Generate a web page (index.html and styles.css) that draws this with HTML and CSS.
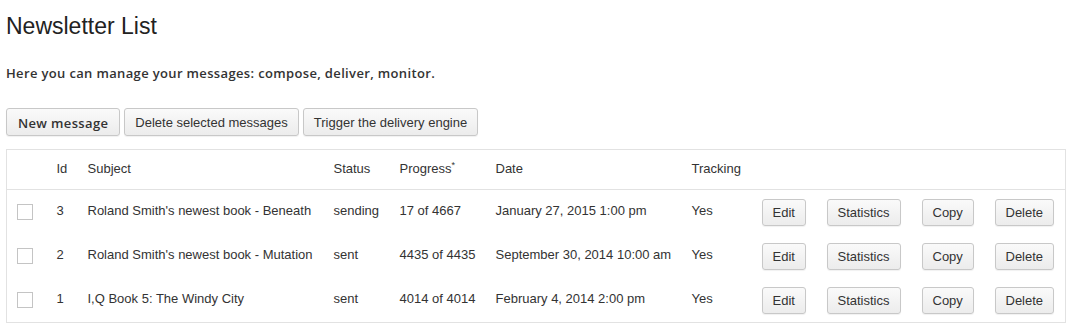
FILE: index.html
```html
<!DOCTYPE html>
<html lang="en">
<head>
    <meta charset="UTF-8">
    <title>Newsletter List</title>
    <link rel="stylesheet" href="styles.css">
</head>
<body>
    <div class="page">
        <h1 class="title">Newsletter List</h1>
        <p class="intro">Here you can manage your messages: compose, deliver, monitor.</p>

        <div class="toolbar">
            <button class="btn btn-strong">New message</button>
            <button class="btn">Delete selected messages</button>
            <button class="btn">Trigger the delivery engine</button>
        </div>

        <table class="list">
            <colgroup>
                <col style="width: 42px">
                <col style="width: 31px">
                <col style="width: 246px">
                <col style="width: 66px">
                <col style="width: 96px">
                <col style="width: 196px">
                <col style="width: 70px">
                <col style="width: 65px">
                <col style="width: 95px">
                <col style="width: 73px">
                <col>
            </colgroup>
            <thead>
                <tr>
                    <th></th>
                    <th>Id</th>
                    <th>Subject</th>
                    <th>Status</th>
                    <th class="progress-head">Progress<sup>*</sup></th>
                    <th>Date</th>
                    <th>Tracking</th>
                    <th></th>
                    <th></th>
                    <th></th>
                    <th></th>
                </tr>
            </thead>
            <tbody>
                <tr>
                    <td class="check"><span class="box"></span></td>
                    <td>3</td>
                    <td>Roland Smith's newest book - Beneath</td>
                    <td>sending</td>
                    <td>17 of 4667</td>
                    <td>January 27, 2015 1:00 pm</td>
                    <td>Yes</td>
                    <td class="action"><button class="btn btn-sm">Edit</button></td>
                    <td class="action"><button class="btn btn-sm">Statistics</button></td>
                    <td class="action"><button class="btn btn-sm">Copy</button></td>
                    <td class="action"><button class="btn btn-sm">Delete</button></td>
                </tr>
                <tr>
                    <td class="check"><span class="box"></span></td>
                    <td>2</td>
                    <td>Roland Smith's newest book - Mutation</td>
                    <td>sent</td>
                    <td>4435 of 4435</td>
                    <td>September 30, 2014 10:00 am</td>
                    <td>Yes</td>
                    <td class="action"><button class="btn btn-sm">Edit</button></td>
                    <td class="action"><button class="btn btn-sm">Statistics</button></td>
                    <td class="action"><button class="btn btn-sm">Copy</button></td>
                    <td class="action"><button class="btn btn-sm">Delete</button></td>
                </tr>
                <tr>
                    <td class="check"><span class="box"></span></td>
                    <td>1</td>
                    <td>I,Q Book 5: The Windy City</td>
                    <td>sent</td>
                    <td>4014 of 4014</td>
                    <td>February 4, 2014 2:00 pm</td>
                    <td>Yes</td>
                    <td class="action"><button class="btn btn-sm">Edit</button></td>
                    <td class="action"><button class="btn btn-sm">Statistics</button></td>
                    <td class="action"><button class="btn btn-sm">Copy</button></td>
                    <td class="action"><button class="btn btn-sm">Delete</button></td>
                </tr>
            </tbody>
        </table>
    </div>
</body>
</html>
```

FILE: styles.css
```css
body {
    margin: 0;
    font-family: "Liberation Sans", Arial, sans-serif;
    font-size: 13px;
    color: #333;
    background: #fff;
}
.page {
    padding: 0 6px;
}
.title {
    margin: 0;
    padding-top: 12px;
    font-size: 23px;
    font-weight: normal;
    line-height: 28px;
    color: #222;
}
.intro {
    margin: 24px 0 0;
    font-family: "Open Sans", sans-serif;
    font-weight: 600;
    font-size: 13px;
    line-height: 18px;
    letter-spacing: 0.35px;
    color: #333;
}
.toolbar {
    display: flex;
    gap: 4px;
    margin-top: 26px;
}
.btn {
    height: 28px;
    padding: 0 10px;
    font-family: "Liberation Sans", Arial, sans-serif;
    font-size: 13px;
    color: #333;
    background: linear-gradient(#fafafa, #ececec);
    border: 1px solid #c8c8c8;
    border-radius: 3px;
    box-shadow: 0 1px 1px rgba(0, 0, 0, 0.06);
}
.btn-strong {
    padding: 2px 11px 0;
    font-family: "Open Sans", sans-serif;
    font-weight: 600;
    letter-spacing: 0.35px;
}
.btn-sm {
    height: 27px;
}
.list {
    margin-top: 13px;
    width: 1060px;
    border: 1px solid #e2e2e2;
    border-collapse: collapse;
    table-layout: fixed;
}
.list th,
.list td {
    padding: 0 0 3px 8px;
    text-align: left;
    white-space: nowrap;
}
.list th {
    height: 36px;
    font-weight: normal;
    border-bottom: 1px solid #e2e2e2;
}
.progress-head {
    padding-top: 6px;
}
.progress-head sup {
    font-size: 9px;
}
.list td {
    height: 41px;
}
.list td.check,
.list td.action {
    padding-bottom: 0;
}
.list td.check {
    padding-left: 10px;
}
.box {
    display: block;
    width: 14px;
    height: 14px;
    border: 1px solid #c4c4c4;
    background: #fff;
}
```
